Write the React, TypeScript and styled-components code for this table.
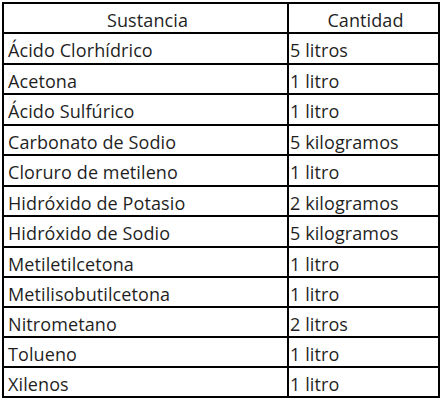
import React from "react";
import styled, { createGlobalStyle } from "styled-components";

const Global = createGlobalStyle`
  html, body { margin: 0; padding: 0; background: #fff; }
  body { font-family: "Open Sans", "Noto Sans", sans-serif; }
`;

const Wrap = styled.div`
  padding: 2px 0 0 2px;
`;

const Table = styled.table`
  border-collapse: collapse;
  width: 438px;
  table-layout: fixed;
  font-family: "Open Sans", "Noto Sans", sans-serif;
  font-size: 18px;
  letter-spacing: 0.1px;
  color: #1f1f1f;
`;

const Cell = styled.td<{ $head?: boolean; $right?: boolean; $tall?: boolean }>`
  border: 2px solid #000;
  height: ${(p) => (p.$tall ? "26px" : "25px")};
  padding: 3px 0 0 ${(p) => (p.$right ? "1px" : "4px")};
  line-height: 24px;
  font-weight: 400;
  text-align: ${(p) => (p.$head ? "center" : "left")};
  white-space: nowrap;
  box-sizing: content-box;
  vertical-align: middle;
`;

const rows: [string, string][] = [
  ["Ácido Clorhídrico", "5 litros"],
  ["Acetona", "1 litro"],
  ["Ácido Sulfúrico", "1 litro"],
  ["Carbonato de Sodio", "5 kilogramos"],
  ["Cloruro de metileno", "1 litro"],
  ["Hidróxido de Potasio", "2 kilogramos"],
  ["Hidróxido de Sodio", "5 kilogramos"],
  ["Metiletilcetona", "1 litro"],
  ["Metilisobutilcetona", "1 litro"],
  ["Nitrometano", "2 litros"],
  ["Tolueno", "1 litro"],
  ["Xilenos", "1 litro"],
];

export default function App() {
  return (
    <Wrap>
      <Global />
      <Table>
        <colgroup>
          <col style={{ width: 285 }} />
          <col />
        </colgroup>
        <thead>
          <tr>
            <Cell as="th" $head>Sustancia</Cell>
            <Cell as="th" $head>Cantidad</Cell>
          </tr>
        </thead>
        <tbody>
          {rows.map(([s, c], i) => {
            const tall = i % 2 === 0 && i < 7;
            return (
              <tr key={s}>
                <Cell $tall={tall}>{s}</Cell>
                <Cell $right $tall={tall}>{c}</Cell>
              </tr>
            );
          })}
        </tbody>
      </Table>
    </Wrap>
  );
}
